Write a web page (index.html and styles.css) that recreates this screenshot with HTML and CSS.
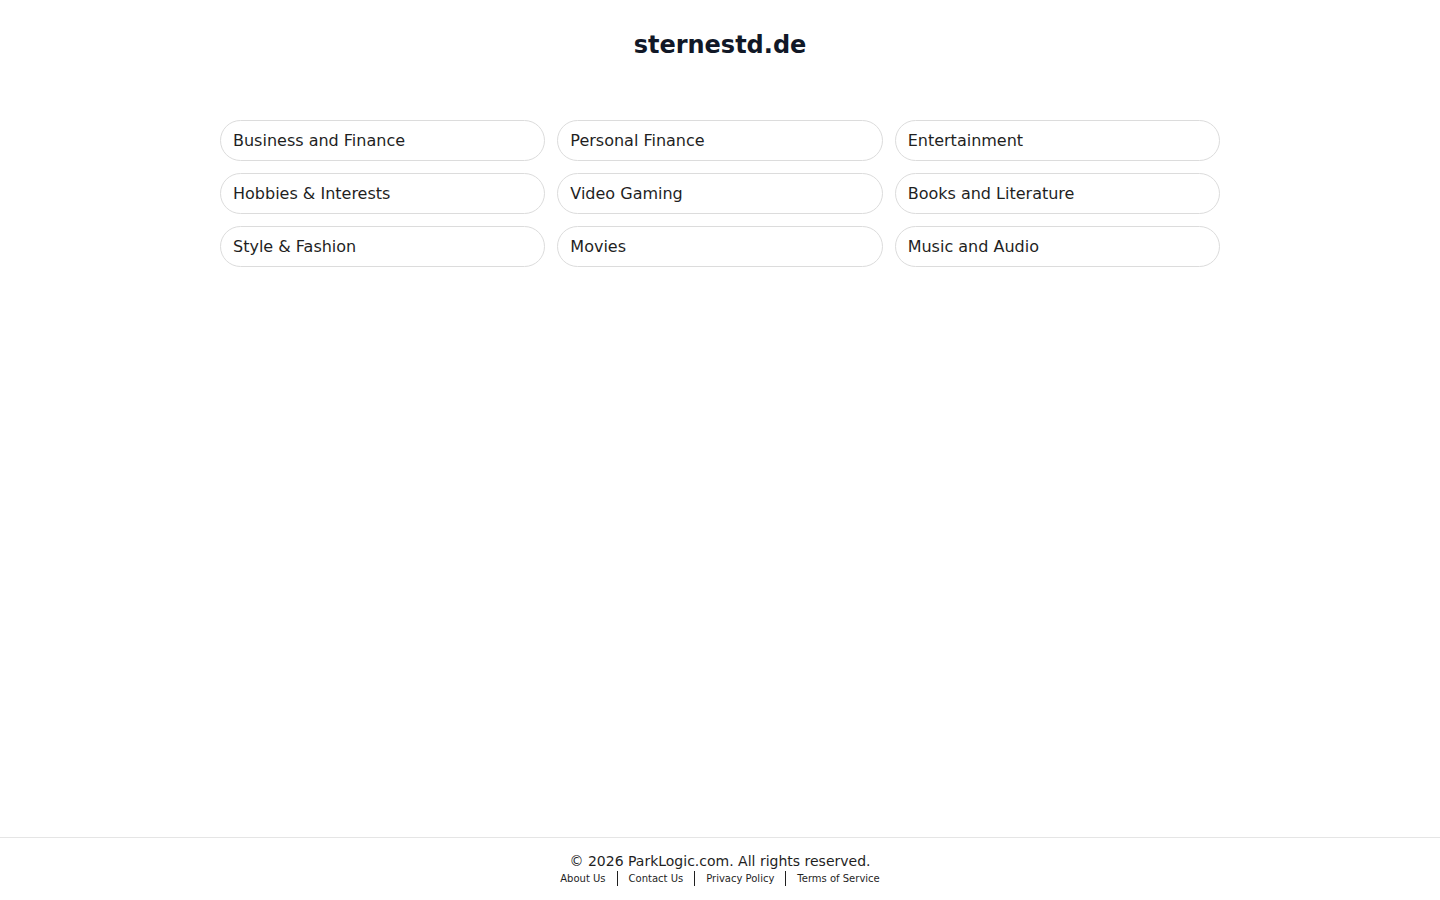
FILE: index.html
```html
<!DOCTYPE html>
<html lang="en">
<head>
<meta charset="utf-8">
<title>sternestd.de</title>
<link rel="stylesheet" href="styles.css">
</head>
<body>
<div class="page">
  <main class="main">
    <h1 class="title">sternestd.de</h1>
    <div class="grid">
      <a class="chip" href="#">Business and Finance</a>
      <a class="chip" href="#">Personal Finance</a>
      <a class="chip" href="#">Entertainment</a>
      <a class="chip" href="#">Hobbies &amp; Interests</a>
      <a class="chip" href="#">Video Gaming</a>
      <a class="chip" href="#">Books and Literature</a>
      <a class="chip" href="#">Style &amp; Fashion</a>
      <a class="chip" href="#">Movies</a>
      <a class="chip" href="#">Music and Audio</a>
    </div>
  </main>
  <footer class="footer">
    <div class="copy">© 2026 ParkLogic.com. All rights reserved.</div>
    <div class="links">
      <a href="#">About Us</a><span class="sep"></span><a href="#">Contact Us</a><span class="sep"></span><a href="#">Privacy Policy</a><span class="sep"></span><a href="#">Terms of Service</a>
    </div>
  </footer>
</div>
</body>
</html>
```

FILE: styles.css
```css
* { box-sizing: border-box; }
html, body { margin: 0; padding: 0; background: #fff; }
body {
  font-family: "DejaVu Sans", sans-serif;
  color: #1f1f1f;
}
.page {
  min-height: 100vh;
  display: flex;
  flex-direction: column;
}
.main {
  flex: 1;
  display: flex;
  flex-direction: column;
  align-items: center;
}
.title {
  margin: 29px 0 0;
  font-size: 24px;
  line-height: 32px;
  font-weight: bold;
  color: #111827;
}
.grid {
  margin-top: 59px;
  width: 1000px;
  display: grid;
  grid-template-columns: repeat(3, 1fr);
  gap: 12px;
}
.chip {
  display: flex;
  align-items: center;
  height: 41px;
  padding: 0 12px;
  border: 1px solid #dcdcdc;
  border-radius: 999px;
  font-size: 16px;
  color: #1f1f1f;
  text-decoration: none;
}
.footer {
  border-top: 1px solid #e5e5e5;
  height: 63px;
  padding-top: 15px;
  text-align: center;
}
.copy {
  font-size: 14px;
  line-height: 16px;
  color: #1f1f1f;
}
.links {
  margin-top: 2px;
  display: flex;
  justify-content: center;
  align-items: center;
  font-size: 10px;
  line-height: 14px;
}
.links a {
  color: #1f1f1f;
  text-decoration: none;
}
.sep {
  display: inline-block;
  width: 1px;
  height: 15px;
  background: #1f1f1f;
  margin: 0 11px;
}
```
